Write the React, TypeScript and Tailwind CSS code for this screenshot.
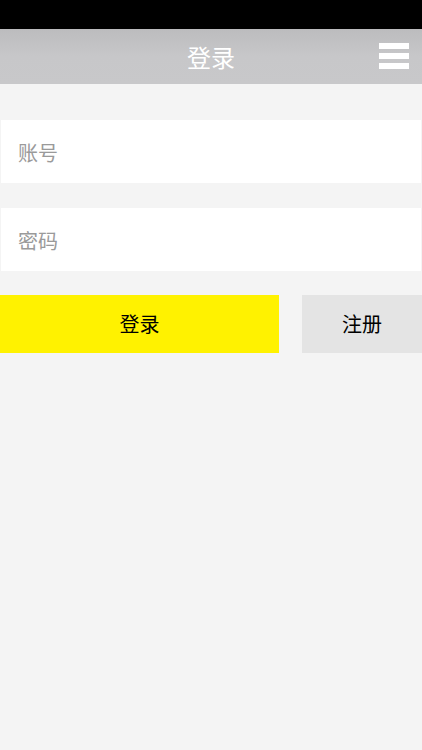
const font = { fontFamily: '"Noto Sans CJK SC", "Noto Sans", sans-serif' };

const MenuIcon = () => (
  <div className="flex w-[30px] flex-col gap-[4px]">
    <span className="block h-[6px] w-full bg-white" />
    <span className="block h-[6px] w-full bg-white" />
    <span className="block h-[6px] w-full bg-white" />
  </div>
);

export default function App() {
  return (
    <div className="min-h-[750px] w-full bg-[#f4f4f4]" style={font}>
      {/* status bar */}
      <div className="h-[29px] w-full bg-black" />

      {/* header */}
      <header className="relative flex h-[55px] items-center justify-center bg-gradient-to-b from-[#bcbcbe] via-[#c7c7c9] to-[#c8c8ca]">
        <h1 className="text-[24px] leading-none text-white">登录</h1>
        <button className="absolute right-[13px] top-[14px]">
          <MenuIcon />
        </button>
      </header>

      {/* form */}
      <div className="flex flex-col pt-[36px]">
        <div className="mx-[1px] flex h-[63px] items-center bg-white px-[17px] pt-[3px]">
          <input
            placeholder="账号"
            className="w-full bg-transparent text-[20px] text-black outline-none placeholder:text-[#9a9a9a]"
          />
        </div>
        <div className="mx-[1px] mt-[25px] flex h-[63px] items-center bg-white px-[17px] pt-[3px]">
          <input
            type="password"
            placeholder="密码"
            className="w-full bg-transparent text-[20px] text-black outline-none placeholder:text-[#9a9a9a]"
          />
        </div>

        <div className="mt-[24px] flex h-[58px] gap-[23px]">
          <button className="flex w-[279px] items-center justify-center bg-[#fff200] text-[20px] text-black">
            登录
          </button>
          <button className="flex flex-1 items-center justify-center bg-[#e4e4e4] text-[20px] text-black">
            注册
          </button>
        </div>
      </div>
    </div>
  );
}
